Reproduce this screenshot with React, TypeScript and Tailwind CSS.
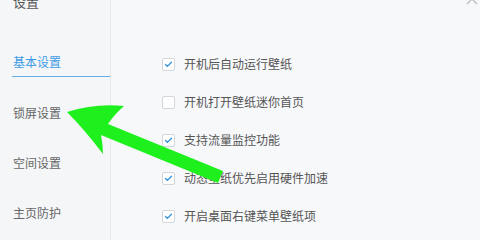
import { Check } from 'lucide-react'

const NAV = ['锁屏设置', '空间设置', '主页防护']

const OPTIONS = [
  { label: '开机后自动运行壁纸', checked: true },
  { label: '开机打开壁纸迷你首页', checked: false },
  { label: '支持流量监控功能', checked: true },
  { label: '动态壁纸优先启用硬件加速', checked: true },
  { label: '开启桌面右键菜单壁纸项', checked: true },
]

function Checkbox({ checked }: { checked: boolean }) {
  return (
    <div className="w-[13px] h-[13px] flex-shrink-0 rounded-[2px] border border-[#d3d6db] bg-white flex items-center justify-center">
      {checked && <Check size={9} strokeWidth={3.5} className="text-[#2f8fdc]" />}
    </div>
  )
}

export default function App() {
  return (
    <div
      className="relative w-[480px] h-[240px] overflow-hidden flex bg-[#f7f8fa]"
      style={{ fontFamily: '"Noto Sans CJK SC", "Noto Sans", sans-serif' }}
    >
      {/* sidebar */}
      <div className="w-[111px] h-full flex-shrink-0 flex flex-col pl-[12px] bg-[#f5f6f8] border-r border-[#e6e8eb]">
        <div className="-mt-[6px] h-[16px] leading-[16px] pl-[1px] text-[13px] text-[#555]">设置</div>
        <div className="mt-[37px] h-[30px] flex items-center pl-[1px] border-b border-[#66ade3] text-[12px] text-[#3d9be5]">
          基本设置
        </div>
        <div className="mt-[11px] flex flex-col">
          {NAV.map(n => (
            <div key={n} className="h-[50px] flex items-center pl-[1px] text-[12px] text-[#666]">
              {n}
            </div>
          ))}
        </div>
      </div>

      {/* content */}
      <div className="flex-1 flex flex-col">
        <div className="h-[45px] flex justify-end pr-[2px]">
          <svg width="12" height="12" viewBox="0 0 12 12" className="-mt-[7px]">
            <path d="M1 1 L11 11 M11 1 L1 11" stroke="#b8bcc2" strokeWidth="1.3" />
          </svg>
        </div>
        <div className="flex flex-col pl-[51px]">
          {OPTIONS.map(o => (
            <div key={o.label} className="h-[38px] flex items-center gap-[9px]">
              <Checkbox checked={o.checked} />
              <span className="text-[12px] text-[#555]">{o.label}</span>
            </div>
          ))}
        </div>
      </div>

      {/* green arrow annotation */}
      <svg className="absolute left-0 top-0 pointer-events-none" width="480" height="240" viewBox="0 0 480 240">
        <path
          d="M67,112 Q95,103 124,106 Q113,116 108,124 L223,171 L218,183 L101,135 Q103,145 103,154 Q84,129 67,112 Z"
          fill="#1ef01e"
        />
      </svg>
    </div>
  )
}
